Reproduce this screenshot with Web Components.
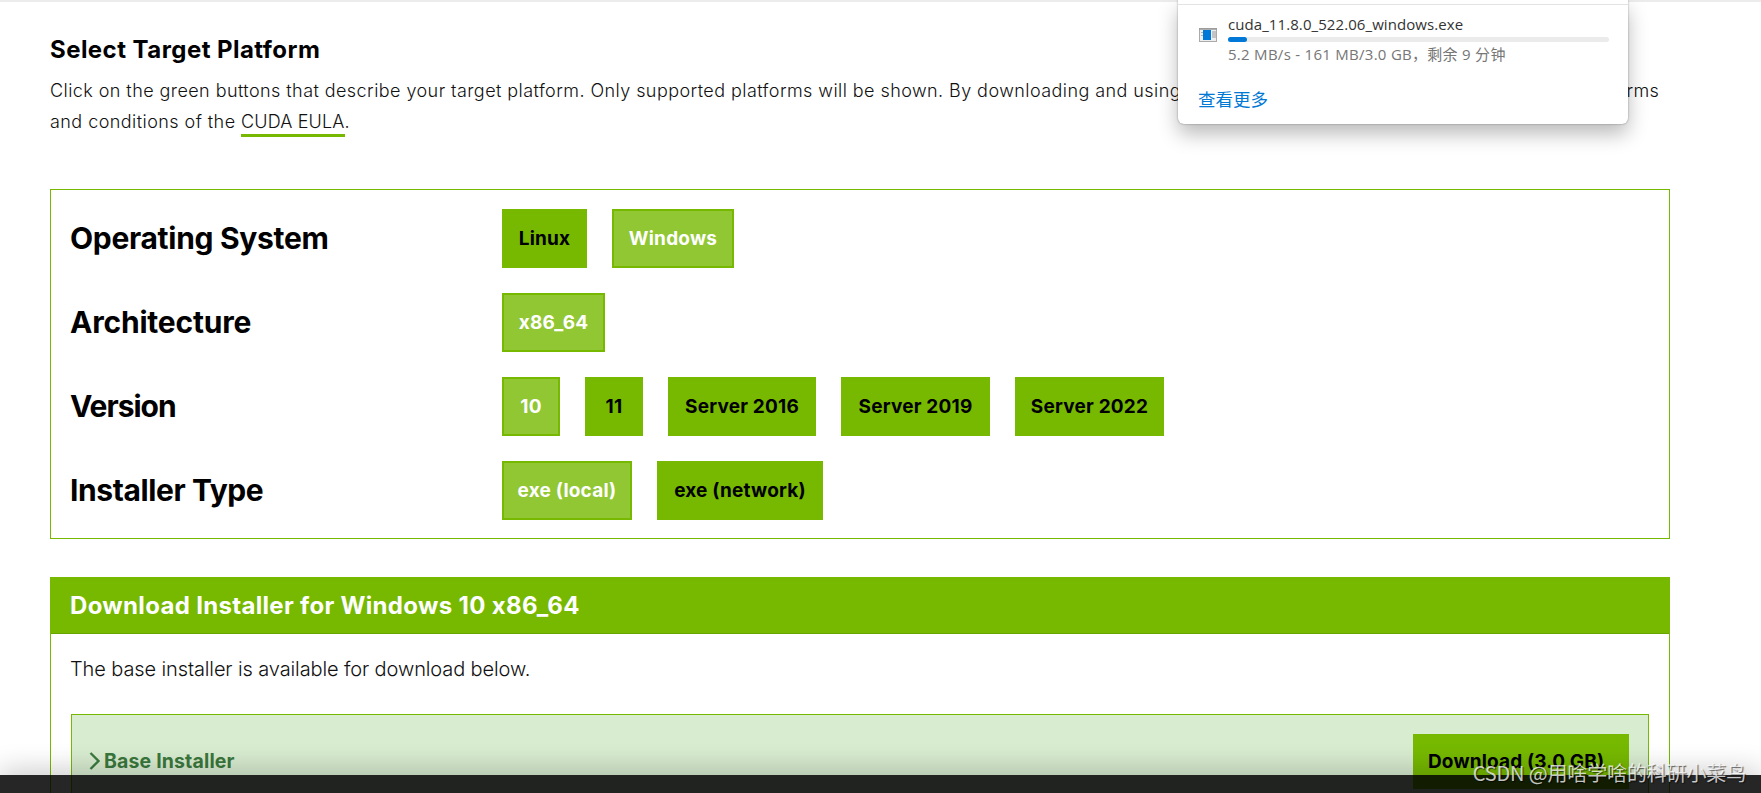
<!DOCTYPE html>
<html lang="en">
<head>
<meta charset="utf-8">
<title>CUDA Toolkit Downloads</title>
<style>
    html, body {
        margin: 0;
        height: 793px;
        overflow: hidden;
        background: #fff;
        font-family: Inter, Roboto, "Liberation Sans", sans-serif;
    }
</style>
</head>
<body>
<cuda-page>
    <platform-intro></platform-intro>
    <target-panel>
        <option-row label="Operating System" spacing="-0.3px">
            <option-button width="85">Linux</option-button>
            <option-button width="122" selected>Windows</option-button>
        </option-row>
        <option-row label="Architecture" spacing="-0.2px">
            <option-button width="103" selected>x86_64</option-button>
        </option-row>
        <option-row label="Version" spacing="-1px">
            <option-button width="58" selected>10</option-button>
            <option-button width="58">11</option-button>
            <option-button width="148">Server 2016</option-button>
            <option-button width="149">Server 2019</option-button>
            <option-button width="149">Server 2022</option-button>
        </option-row>
        <option-row label="Installer Type" spacing="-0.4px">
            <option-button width="130" selected>exe (local)</option-button>
            <option-button width="166">exe (network)</option-button>
        </option-row>
    </target-panel>
    <download-panel>
        <span slot="title">Download Installer for Windows 10 x86_64</span>
        <span slot="text">The base installer is available for download below.</span>
        <installer-item>
            Base Installer
            <span slot="action">Download (3.0 GB)</span>
        </installer-item>
    </download-panel>
</cuda-page>
<download-popup></download-popup>
<bottom-bar></bottom-bar>
<author-mark>CSDN @用啥学啥的科研小菜鸟</author-mark>

<script>
class BaseElement extends HTMLElement {
    constructor() {
        super();
        this.attachShadow( { mode: 'open' } );
    }

    connectedCallback() {
        const template = document.createElement( 'template' );
        template.innerHTML = this.getStyles() + this.getTemplate();
        this.shadowRoot.appendChild( template.content.cloneNode( true ) );
    }
}

class CudaPage extends BaseElement {
    getTemplate() { return `<slot></slot>` }

    getStyles() {
        return `
            <style>
                :host {
                    display: flex;
                    flex-direction: column;
                    box-sizing: border-box;
                    height: 793px;
                    padding: 34px 91px 0 50px;
                    border-top: 2px solid #ececec;
                    overflow: hidden;
                }
            </style>
        `
    }
}

class PlatformIntro extends BaseElement {
    getTemplate() {
        return `
            <h2>Select Target Platform</h2>
            <p>
                <span class="first">Click on the green buttons that describe your target platform. Only supported platforms will be shown. By downloading and using the software, you agree to fully comply with the terms</span><br>
                <span class="second">and conditions of the <a>CUDA EULA</a>.</span>
            </p>
        `
    }

    getStyles() {
        return `
            <style>
                :host { display: block; height: 153px; flex: none; }
                h2 {
                    margin: 0;
                    font-size: 24px;
                    line-height: 28px;
                    font-weight: 700;
                    letter-spacing: 0.45px;
                }
                p {
                    margin: 11px 0 0;
                    font-size: 18px;
                    line-height: 31px;
                    font-weight: 350;
                    color: #111;
                    white-space: nowrap;
                }
                .first { letter-spacing: 0.43px; }
                .second { letter-spacing: 0.44px; }
                a { border-bottom: 3px solid #76b900; padding-bottom: 2px; letter-spacing: 0.15px; }
            </style>
        `
    }
}

class TargetPanel extends BaseElement {
    getTemplate() { return `<slot></slot>` }

    getStyles() {
        return `
            <style>
                :host {
                    display: flex;
                    flex: none;
                    flex-direction: column;
                    gap: 25px;
                    box-sizing: border-box;
                    height: 350px;
                    padding: 19px;
                    border: 1px solid #76b900;
                }
            </style>
        `
    }
}

class OptionRow extends BaseElement {
    getTemplate() {
        return `
            <h3>${this.getAttribute( 'label' )}</h3>
            <div class="options"><slot></slot></div>
        `
    }

    getStyles() {
        return `
            <style>
                :host { display: flex; align-items: center; height: 59px; }
                h3 {
                    margin: 0 0 2px;
                    width: 432px;
                    font-size: 30px;
                    line-height: 36px;
                    font-weight: 700;
                    letter-spacing: ${this.getAttribute( 'spacing' )};
                }
                .options { display: flex; gap: 25px; }
            </style>
        `
    }
}

class OptionButton extends BaseElement {
    getTemplate() { return `<slot></slot>` }

    getStyles() {
        return `
            <style>
                :host {
                    display: flex;
                    align-items: center;
                    justify-content: center;
                    box-sizing: border-box;
                    width: ${this.getAttribute( 'width' )}px;
                    height: 59px;
                    padding-bottom: 1px;
                    border: 2px solid #76b900;
                    background: #76b900;
                    color: #000;
                    font-size: 19px;
                    font-weight: 700;
                    letter-spacing: 0.2px;
                    white-space: nowrap;
                }
                :host([selected]) { background: #91c733; color: #fff; }
            </style>
        `
    }
}

class DownloadPanel extends BaseElement {
    getTemplate() {
        return `
            <header><slot name="title"></slot></header>
            <div class="body">
                <p><slot name="text"></slot></p>
                <slot></slot>
            </div>
        `
    }

    getStyles() {
        return `
            <style>
                :host {
                    display: block;
                    flex: none;
                    margin-top: 38px;
                    height: 300px;
                    border: 1px solid #76b900;
                    box-sizing: border-box;
                }
                header {
                    height: 55px;
                    padding-left: 19px;
                    border-bottom: 1px solid #69a500;
                    background: #76b900;
                    color: #fff;
                    font-size: 24px;
                    line-height: 55px;
                    font-weight: 700;
                    letter-spacing: 0.32px;
                }
                .body { padding: 20px; }
                p {
                    margin: 0 0 29px -1px;
                    font-size: 20px;
                    line-height: 31px;
                    font-weight: 350;
                    letter-spacing: -0.11px;
                    color: #111;
                }
            </style>
        `
    }
}

class InstallerItem extends BaseElement {
    getTemplate() {
        return `
            <svg width="12" height="20" viewBox="0 0 12 20">
                <path d="M1.5 2 L9.5 10 L1.5 18" fill="none" stroke="#3a7a3e" stroke-width="2.4"/>
            </svg>
            <div class="name"><slot></slot></div>
            <div class="button"><slot name="action"></slot></div>
        `
    }

    getStyles() {
        return `
            <style>
                :host {
                    display: flex;
                    align-items: center;
                    box-sizing: border-box;
                    height: 95px;
                    padding: 0 19px 0 17px;
                    border: 1px solid #76b900;
                    background: #d8ecd0;
                    font-weight: 700;
                }
                svg { margin-bottom: 2px; }
                .name {
                    flex: 1;
                    margin: 0 0 2px 3px;
                    color: #3a773c;
                    font-size: 19.5px;
                    letter-spacing: 0.15px;
                }
                .button {
                    box-sizing: border-box;
                    width: 216px;
                    height: 55px;
                    padding-left: 15px;
                    background: #76b900;
                    color: #000;
                    line-height: 55px;
                    font-size: 19px;
                    letter-spacing: 0.15px;
                    white-space: nowrap;
                }
            </style>
        `
    }
}

class DownloadPopup extends BaseElement {
    getTemplate() {
        return `
            <div class="item">
                <svg width="18" height="14" viewBox="0 0 18 14">
                    <rect x=".5" y=".5" width="17" height="13" fill="#eee" stroke="#aaa"/>
                    <path d="M0 1H18" stroke="#999" stroke-width="1.5"/>
                    <path d="M2 4.5H4M2 7.5H4" stroke="#aaa"/>
                    <rect x="4" y="2" width="8" height="10" fill="#0078d7"/>
                    <rect x="13" y="3" width="4" height="7" fill="#c4c4c4"/>
                </svg>
                <div class="info">
                    <div class="file">cuda_11.8.0_522.06_windows.exe</div>
                    <div class="track"><div class="bar"></div></div>
                    <div class="status">5.2 MB/s - 161 MB/3.0 GB，剩余 9 分钟</div>
                </div>
            </div>
            <div class="more">查看更多</div>
        `
    }

    getStyles() {
        return `
            <style>
                /* browser flyout, open over the page */
                :host {
                    position: absolute;
                    top: 0;
                    left: 1178px;
                    box-sizing: border-box;
                    width: 450px;
                    height: 124px;
                    padding-top: 4px;
                    border-radius: 0 0 6px 6px;
                    background: #fff;
                    box-shadow: 0 0 2px rgba(0, 0, 0, .4), 0 10px 20px rgba(0, 0, 0, .27);
                    font-family: "Open Sans", "Noto Sans CJK SC", sans-serif;
                }
                .item {
                    display: flex;
                    gap: 11px;
                    height: 74px;
                    box-sizing: border-box;
                    padding: 10px 19px 0 21px;
                    border-top: 1px solid #e3e3e3;
                }
                svg { margin-top: 13px; flex: none; }
                .info { flex: 1; }
                .file { height: 22px; line-height: 19px; font-size: 15px; color: #333; letter-spacing: 0.08px; }
                .track { height: 5px; border-radius: 3px; background: #ebebeb; }
                .bar { width: 19px; height: 5px; border-radius: 3px; background: #0078d7; }
                .status {
                    margin-top: 2px;
                    line-height: 20px;
                    font-size: 15px;
                    letter-spacing: 0.28px;
                    color: #767676;
                    white-space: nowrap;
                }
                .more { padding-left: 20px; line-height: 42px; font-size: 17.5px; color: #0078d4; }
            </style>
        `
    }
}

class BottomBar extends BaseElement {
    getTemplate() { return `` }

    getStyles() {
        return `
            <style>
                /* translucent strip covering the end of the page */
                :host {
                    position: absolute;
                    top: 775px;
                    left: 0;
                    width: 1761px;
                    height: 18px;
                    background: rgba(0, 0, 0, .85);
                    box-shadow: 0 0 30px rgba(0, 0, 0, .32);
                }
            </style>
        `
    }
}

class AuthorMark extends BaseElement {
    getTemplate() { return `<slot></slot>` }

    getStyles() {
        return `
            <style>
                :host {
                    position: absolute;
                    top: 759px;
                    right: 15px;
                    font: 20px/28px "Noto Sans CJK SC", sans-serif;
                    color: rgba(255, 255, 255, .75);
                    text-shadow: 1px 1px 1px rgba(0, 0, 0, .6);
                    letter-spacing: -0.15px;
                    white-space: nowrap;
                }
            </style>
        `
    }
}

customElements.define( 'cuda-page', CudaPage );
customElements.define( 'platform-intro', PlatformIntro );
customElements.define( 'target-panel', TargetPanel );
customElements.define( 'option-row', OptionRow );
customElements.define( 'option-button', OptionButton );
customElements.define( 'download-panel', DownloadPanel );
customElements.define( 'installer-item', InstallerItem );
customElements.define( 'download-popup', DownloadPopup );
customElements.define( 'bottom-bar', BottomBar );
customElements.define( 'author-mark', AuthorMark );
</script>
</body>
</html>
